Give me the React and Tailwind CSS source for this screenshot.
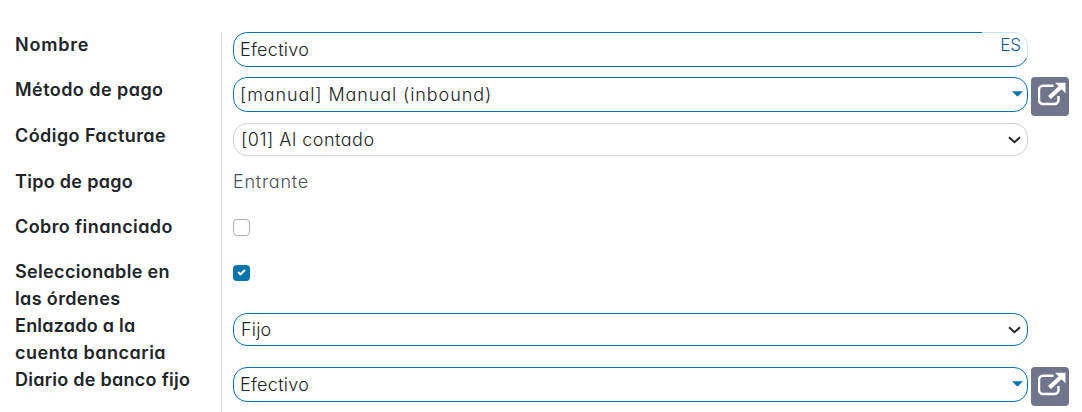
const LABEL = "block w-fit whitespace-nowrap";

function Label({ lines, shift = "-mt-px" }) {
  return (
    <div className={`w-[221px] shrink-0 pl-[15px] text-[18px] leading-[27px] font-semibold text-[#212529] ${shift}`}>
      {lines.map(([text, spacing]) => (
        <span key={text} className={`${LABEL} ${spacing}`}>{text}</span>
      ))}
    </div>
  );
}

function Row({ lines, height, shift, children }) {
  return (
    <div className={`flex shrink-0 items-stretch ${height}`}>
      <Label lines={lines} shift={shift} />
      <div className="flex grow items-start border-l border-[#d5d7da] pl-[11px]">{children}</div>
    </div>
  );
}

function Field({ text, spacing, className, icon }) {
  return (
    <div className={`relative flex w-[795px] items-center justify-between rounded-[14px] border text-[18px] font-light text-[#212529] ${className}`}>
      <span className={`-mt-px whitespace-nowrap ${spacing}`}>{text}</span>
      {icon}
    </div>
  );
}

function Caret() {
  return (
    <svg className="mr-[4px] -mt-[2px] h-[6px] w-[11px]" viewBox="0 0 11 6">
      <path d="M0 0.3H11L6 5.3H5Z" fill="#0874ad" />
    </svg>
  );
}

function Chevron() {
  return (
    <svg className="mr-[6px] h-[8px] w-[13px]" viewBox="0 0 13 8" fill="none">
      <path d="M1 1.2L6.5 6.2L12 1.2" stroke="#212529" strokeWidth="2" />
    </svg>
  );
}

function OpenButton() {
  return (
    <button className="ml-[3px] flex h-[39px] w-[38px] items-start rounded-[4px] bg-[#71758c] pt-[5px] pl-[7px]">
      <svg className="h-[24px] w-[28px]" viewBox="0 0 28 24" fill="none">
        <path d="M15.5 3.8H5A4 4 0 0 0 1 7.8V18A4 4 0 0 0 5 22H16A4 4 0 0 0 20.5 18V14" stroke="#fff" strokeWidth="2.5" />
        <path d="M11.5 15.5L24 4" stroke="#fff" strokeWidth="4.2" />
        <path d="M17 0.7H27.5V11.2Z" fill="#fff" />
      </svg>
    </button>
  );
}

export default function App() {
  return (
    <main className="flex h-[412px] w-[1082px] flex-col overflow-hidden bg-white pt-[32px] font-['Inter',sans-serif] [font-feature-settings:'cv11']">
      <Row height="h-[45px]" lines={[["Nombre", "tracking-[0.8px]"]]}>
        <Field
          text="Efectivo"
          spacing="tracking-[0.3px]"
          className="h-[35px] border-[#0874ad] pl-[6px]"
          icon={
            <span className="absolute -top-px -right-px flex h-[26px] w-[46px] justify-end bg-white/80 pr-[7px] text-[17px] leading-[27px] font-light text-[#0f5f92]">ES</span>
          }
        />
      </Row>
      <Row height="h-[46px]" lines={[["Método de pago", "tracking-[0.45px]"]]}>
        <Field text="[manual] Manual (inbound)" spacing="tracking-[0.9px]" className="h-[35px] border-[#0874ad] pl-[6px]" icon={<Caret />} />
        <OpenButton />
      </Row>
      <Row height="h-[45px]" lines={[["Código Facturae", "tracking-[0.43px]"]]}>
        <Field text="[01] Al contado" spacing="tracking-[0.5px]" className="h-[33px] border-[#ced0d2] pl-[7px]" icon={<Chevron />} />
      </Row>
      <Row height="h-[45px]" shift="mt-0" lines={[["Tipo de pago", "tracking-[0.3px]"]]}>
        <span className="text-[18px] leading-[27px] font-light tracking-[0.75px] text-[#495057]">Entrante</span>
      </Row>
      <Row height="h-[46px]" shift="mt-0" lines={[["Cobro financiado", "tracking-[0.4px]"]]}>
        <span className="mt-[6px] h-[17px] w-[17px] rounded-[4px] border border-[#adb3ba]" />
      </Row>
      <Row height="h-[54px]" lines={[["Seleccionable en", "tracking-[0.35px]"], ["las órdenes", "tracking-[0.36px]"]]}>
        <span className="mt-[6px] flex h-[16px] w-[17px] items-center justify-center rounded-[4px] bg-[#0874ad]">
          <svg className="-mt-[2px] -ml-px h-[7px] w-[9px]" viewBox="0 0 9 7" fill="none">
            <path d="M1 3L3.5 5.3L8 1" stroke="#fff" strokeWidth="2" />
          </svg>
        </span>
      </Row>
      <Row height="h-[54px]" lines={[["Enlazado a la", "tracking-[0.23px]"], ["cuenta bancaria", "tracking-[0.5px]"]]}>
        <Field text="Fijo" spacing="tracking-[0.2px]" className="h-[33px] border-[#0874ad] pl-[7px]" icon={<Chevron />} />
      </Row>
      <Row height="h-[45px]" lines={[["Diario de banco fijo", "tracking-[0.27px]"]]}>
        <Field text="Efectivo" spacing="tracking-[0.3px]" className="h-[35px] border-[#0874ad] pl-[6px]" icon={<Caret />} />
        <OpenButton />
      </Row>
    </main>
  );
}
